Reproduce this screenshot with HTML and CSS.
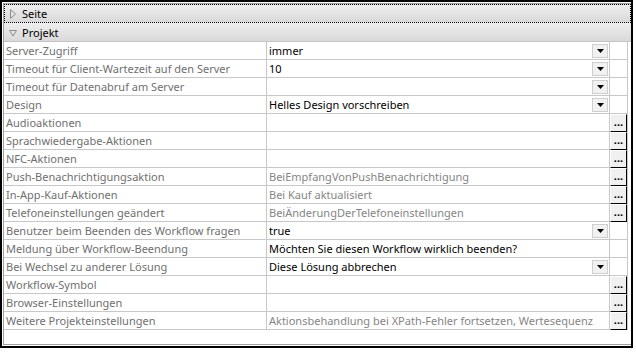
FILE: index.html
```html
<!DOCTYPE html>
<html lang="de">
<head>
  <meta charset="UTF-8">
  <meta name="viewport" content="width=device-width, initial-scale=1.0">
  <title>Projekteigenschaften</title>
  <link rel="stylesheet" href="styles.css">
</head>
<body>
  <div class="frame">
    <div class="grid">
      <div class="group focused">
        <svg class="tri" width="8" height="10" viewBox="0 0 8 10"><polygon points="1.5,0.5 6.5,5 1.5,9.5" fill="none" stroke="#8c8c8c"/></svg>
        <span>Seite</span>
      </div>
      <div class="group open">
        <svg class="tri" width="8" height="10" viewBox="0 0 8 10"><polygon points="0.5,2.5 7.5,2.5 4,8" fill="none" stroke="#8c8c8c"/></svg>
        <span>Projekt</span>
      </div>

      <div class="rows">
        <div class="row">
          <div class="label">Server-Zugriff</div>
          <div class="value"><span>immer</span><span class="drop"></span></div>
          <div class="extra"></div>
        </div>
        <div class="row">
          <div class="label">Timeout für Client-Wartezeit auf den Server</div>
          <div class="value"><span>10</span><span class="drop"></span></div>
          <div class="extra"></div>
        </div>
        <div class="row">
          <div class="label">Timeout für Datenabruf am Server</div>
          <div class="value"><span></span><span class="drop"></span></div>
          <div class="extra"></div>
        </div>
        <div class="row">
          <div class="label">Design</div>
          <div class="value"><span>Helles Design vorschreiben</span><span class="drop"></span></div>
          <div class="extra"></div>
        </div>
        <div class="row">
          <div class="label">Audioaktionen</div>
          <div class="value"></div>
          <div class="extra"><span class="dots">...</span></div>
        </div>
        <div class="row">
          <div class="label">Sprachwiedergabe-Aktionen</div>
          <div class="value"></div>
          <div class="extra"><span class="dots">...</span></div>
        </div>
        <div class="row">
          <div class="label">NFC-Aktionen</div>
          <div class="value"></div>
          <div class="extra"><span class="dots">...</span></div>
        </div>
        <div class="row">
          <div class="label">Push-Benachrichtigungsaktion</div>
          <div class="value muted">BeiEmpfangVonPushBenachrichtigung</div>
          <div class="extra"><span class="dots">...</span></div>
        </div>
        <div class="row">
          <div class="label">In-App-Kauf-Aktionen</div>
          <div class="value muted">Bei Kauf aktualisiert</div>
          <div class="extra"><span class="dots">...</span></div>
        </div>
        <div class="row">
          <div class="label">Telefoneinstellungen geändert</div>
          <div class="value muted">BeiÄnderungDerTelefoneinstellungen</div>
          <div class="extra"><span class="dots">...</span></div>
        </div>
        <div class="row">
          <div class="label">Benutzer beim Beenden des Workflow fragen</div>
          <div class="value"><span>true</span><span class="drop"></span></div>
          <div class="extra"></div>
        </div>
        <div class="row">
          <div class="label">Meldung über Workflow-Beendung</div>
          <div class="value">Möchten Sie diesen Workflow wirklich beenden?</div>
          <div class="extra"></div>
        </div>
        <div class="row">
          <div class="label">Bei Wechsel zu anderer Lösung</div>
          <div class="value"><span>Diese Lösung abbrechen</span><span class="drop"></span></div>
          <div class="extra"></div>
        </div>
        <div class="row">
          <div class="label">Workflow-Symbol</div>
          <div class="value"></div>
          <div class="extra"><span class="dots">...</span></div>
        </div>
        <div class="row">
          <div class="label">Browser-Einstellungen</div>
          <div class="value"></div>
          <div class="extra"><span class="dots">...</span></div>
        </div>
        <div class="row">
          <div class="label">Weitere Projekteinstellungen</div>
          <div class="value muted">Aktionsbehandlung bei XPath-Fehler fortsetzen, Wertesequenz</div>
          <div class="extra"><span class="dots">...</span></div>
        </div>
      </div>
    </div>
  </div>
</body>
</html>
```
FILE: styles.css
```css
body {
  margin: 0;
  background-color: #fff;
  font-family: "Noto Sans", "Open Sans", sans-serif;
  font-size: 11px;
}
.frame {
  width: 633px;
  height: 348px;
  box-sizing: border-box;
  border: 2px solid #000;
  padding: 1px 0 1px 1px;
}
.grid {
  height: 100%;
  box-sizing: border-box;
  border: 1px solid #a0a0a0;
  border-right: none;
  background-color: #fff;
}

/* group headers */
.group {
  display: flex;
  align-items: center;
  height: 18px;
  padding-left: 2px;
  background: linear-gradient(#eeeeee, #d9d9d9);
  border-bottom: 1px solid #c4c4c4;
  color: #000;
}
.group.focused {
  height: 17px;
  border: 1px dotted #000;
  padding-left: 1px;
}
.group .tri {
  margin: 0 5px 0 3px;
}
.group.open .tri {
  margin-top: 1px;
}

/* property rows */
.row {
  display: grid;
  grid-template-columns: 263px 343px 18px;
  height: 18px;
}
.label,
.value,
.extra {
  box-sizing: border-box;
  border-bottom: 1px solid #c8c8c8;
  border-right: 1px solid #c8c8c8;
  line-height: 17px;
  white-space: nowrap;
  overflow: hidden;
}
.label {
  padding-left: 2px;
  color: #6f6f6f;
}
.value {
  display: flex;
  align-items: center;
  justify-content: space-between;
  padding-left: 2px;
  color: #000;
}
.value.muted {
  color: #858585;
}
.drop {
  width: 16px;
  height: 14px;
  box-sizing: border-box;
  margin-right: 1px;
  border: 1px solid #cfcfcf;
  background: #f1f1f1 url("data:image/svg+xml,%3Csvg xmlns='http://www.w3.org/2000/svg' width='7' height='4'%3E%3Cpolygon points='0,0 7,0 3.5,4' fill='%23000'/%3E%3C/svg%3E") no-repeat center;
}
.extra .dots {
  display: block;
  height: 18px;
  box-sizing: border-box;
  border-top: 1px solid #fff;
  border-left: 1px solid #fff;
  border-right: 1px solid #000;
  border-bottom: 1px solid #000;
  background-color: #f0f0f0;
  font-weight: bold;
  font-size: 11px;
  line-height: 14px;
  text-align: center;
  color: #000;
}
.row .extra:has(.dots) {
  border-bottom: none;
}
```
